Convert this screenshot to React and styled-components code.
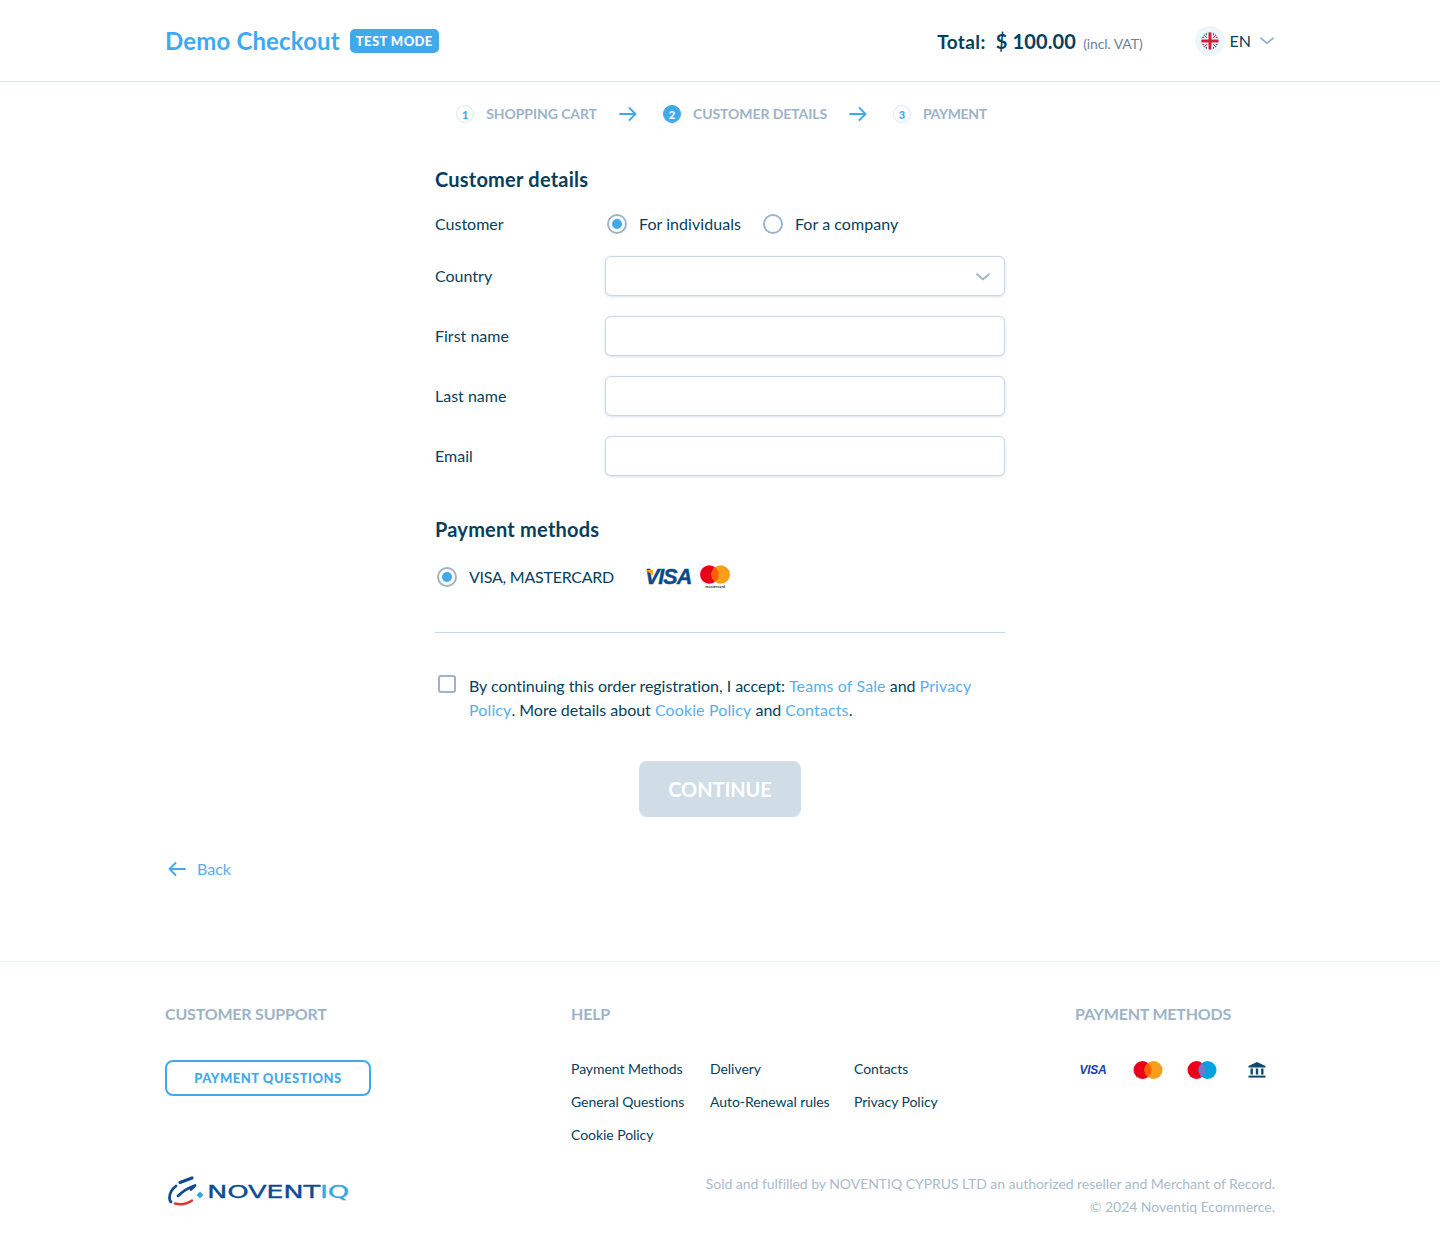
import React from "react";
import styled, { createGlobalStyle } from "styled-components";

const GlobalStyle = createGlobalStyle`
  html, body { margin: 0; padding: 0; background: #fff; }
  body { font-family: "Lato", "Liberation Sans", sans-serif; color: #063f5c; }
  * { box-sizing: border-box; }
`;

const Flag = () => (
  <svg width="18" height="18" viewBox="0 0 18 18">
    <defs>
      <clipPath id="flagClip">
        <circle cx="9" cy="9" r="8.5" />
      </clipPath>
    </defs>
    <g clipPath="url(#flagClip)">
      <rect width="18" height="18" fill="#2f4a8c" />
      <path d="M0 0l18 18M18 0L0 18" stroke="#f4f4f6" strokeWidth="3.4" />
      <path d="M0 0l18 18M18 0L0 18" stroke="#d3203a" strokeWidth="1" />
      <rect x="6" width="6" height="18" fill="#f4f4f6" />
      <rect y="6" width="18" height="6" fill="#f4f4f6" />
      <rect x="7.5" width="3" height="18" fill="#d3203a" />
      <rect y="7.5" width="18" height="3" fill="#d3203a" />
    </g>
  </svg>
);

const Chevron = ({ color = "#9db4c8", w = 14 }) => (
  <svg width={w} height="8" viewBox="0 0 14 8" fill="none">
    <path d="M1 1.2l6 5 6-5" stroke={color} strokeWidth="1.8" strokeLinecap="round" strokeLinejoin="round" />
  </svg>
);

const Arrow = ({ left }) => (
  <ArrowSvg $left={left} width="18" height="14" viewBox="0 0 18 14" fill="none">
    <path d="M1 7h15.5M10.5 1l6 6-6 6" stroke="#3fa9ec" strokeWidth="1.8" strokeLinecap="round" strokeLinejoin="round" />
  </ArrowSvg>
);

const Circles = ({ a, b, mid, w = 29, h = 18 }) => (
  <svg width={w} height={h} viewBox="0 0 29 18">
    <circle cx="9" cy="9" r="9" fill={a} />
    <circle cx="20" cy="9" r="9" fill={b} />
    <path d="M14.5 1.9a9 9 0 0 1 0 14.2a9 9 0 0 1 0-14.2z" fill={mid} />
  </svg>
);

const Bank = () => (
  <svg width="18" height="16" viewBox="0 0 18 16" fill="#0d4a6b">
    <path d="M9 0L17.5 4v1.6H.5V4z" />
    <rect x="2.5" y="6.5" width="2.4" height="6" />
    <rect x="7.8" y="6.5" width="2.4" height="6" />
    <rect x="13.1" y="6.5" width="2.4" height="6" />
    <rect x=".5" y="13.6" width="17" height="2" />
  </svg>
);

const LogoMark = () => (
  <svg width="40" height="32" viewBox="0 0 40 32" fill="none">
    <path d="M9 11C5 14 2.5 18 2.5 23c0 1.500.5 3 1.500 4" stroke="#0e4c92" strokeWidth="2.8" strokeLinecap="round" />
    <path d="M13 7.500L25 3" stroke="#0e4c92" strokeWidth="3.2" strokeLinecap="round" />
    <path d="M11 21c5-5 11-8.500 17-10.500l-4 4" stroke="#0e4c92" strokeWidth="2.8" strokeLinecap="round" strokeLinejoin="round" />
    <path d="M8 28.500c6 1.500 12 .5 17-3" stroke="#e3342f" strokeWidth="2.6" strokeLinecap="round" />
    <path d="M33 16.500l3.500 3.500-3.500 3.500-3.500-3.500z" fill="#35a8e0" />
  </svg>
);

const App = () => {
  return (
    <Page>
      <GlobalStyle />
      <Header>
        <Inner>
          <Brand>
            <BrandName>Demo Checkout</BrandName>
            <TestBadge>TEST MODE</TestBadge>
          </Brand>
          <HeaderRight>
            <Total>
              <TotalLabel>Total:</TotalLabel>
              <TotalPrice>$ 100.00</TotalPrice>
              <Vat>(incl. VAT)</Vat>
            </Total>
            <Lang>
              <FlagHold>
                <Flag />
              </FlagHold>
              <LangText>EN</LangText>
              <Chevron />
            </Lang>
          </HeaderRight>
        </Inner>
      </Header>

      <Steps>
        <Step>
          <StepNum>1</StepNum>
          <StepName>SHOPPING CART</StepName>
        </Step>
        <StepArrow>
          <Arrow />
        </StepArrow>
        <Step>
          <StepNum $active>2</StepNum>
          <StepName>CUSTOMER DETAILS</StepName>
        </Step>
        <StepArrow>
          <Arrow />
        </StepArrow>
        <Step>
          <StepNum>3</StepNum>
          <StepName $tight>PAYMENT</StepName>
        </Step>
      </Steps>

      <Form>
        <SectionTitle>Customer details</SectionTitle>
        <RadioRow>
          <Label>Customer</Label>
          <RadioOption>
            <Radio $on />
            <RadioText>For individuals</RadioText>
          </RadioOption>
          <RadioOption>
            <Radio />
            <RadioText>For a company</RadioText>
          </RadioOption>
        </RadioRow>
        <FieldRow>
          <Label>Country</Label>
          <Field>
            <Chevron />
          </Field>
        </FieldRow>
        <FieldRow>
          <Label>First name</Label>
          <Field />
        </FieldRow>
        <FieldRow>
          <Label>Last name</Label>
          <Field />
        </FieldRow>
        <FieldRow>
          <Label>Email</Label>
          <Field />
        </FieldRow>

        <PayTitle>Payment methods</PayTitle>
        <PayRow>
          <Radio $on />
          <PayName>VISA, MASTERCARD</PayName>
          <VisaText>VISA</VisaText>
          <McHold>
            <Circles a="#eb001b" b="#f79e1b" mid="#ff5f00" w={30} h={19} />
            <McText>mastercard</McText>
          </McHold>
        </PayRow>
        <Divider />
        <Terms>
          <CheckBox />
          <TermsText>
            By continuing this order registration, I accept: <A>Teams of Sale</A> and <A>Privacy Policy</A>. More details about{" "}
            <A>Cookie Policy</A> and <A>Contacts</A>.
          </TermsText>
        </Terms>
        <ContinueWrap>
          <Continue>CONTINUE</Continue>
        </ContinueWrap>
      </Form>

      <BackRow>
        <BackLink>
          <Arrow left />
          Back
        </BackLink>
      </BackRow>

      <Footer>
        <FooterInner>
          <FooterTop>
            <SupportCol>
              <FootTitle>CUSTOMER SUPPORT</FootTitle>
              <OutlineBtn>PAYMENT QUESTIONS</OutlineBtn>
            </SupportCol>
            <HelpCol>
              <FootTitle>HELP</FootTitle>
              <LinksGrid>
                <FootLink>Payment Methods</FootLink>
                <FootLink>Delivery</FootLink>
                <FootLink>Contacts</FootLink>
                <FootLink>General Questions</FootLink>
                <FootLink>Auto-Renewal rules</FootLink>
                <FootLink>Privacy Policy</FootLink>
                <FootLink>Cookie Policy</FootLink>
              </LinksGrid>
            </HelpCol>
            <MethodsCol>
              <FootTitle>PAYMENT METHODS</FootTitle>
              <MethodIcons>
                <MethodIcon>
                  <SmallVisa>VISA</SmallVisa>
                </MethodIcon>
                <MethodIcon>
                  <Circles a="#eb001b" b="#f79e1b" mid="#ff5f00" w={30} h={18} />
                </MethodIcon>
                <MethodIcon>
                  <Circles a="#eb001b" b="#00a1df" mid="#7375cf" w={30} h={18} />
                </MethodIcon>
                <MethodIcon>
                  <Bank />
                </MethodIcon>
              </MethodIcons>
            </MethodsCol>
          </FooterTop>
          <FooterBottom>
            <Logo>
              <LogoMark />
              <LogoWord>
                NOVENT<b>IQ</b>
              </LogoWord>
            </Logo>
            <Legal>
              Sold and fulfilled by NOVENTIQ CYPRUS LTD an authorized reseller and Merchant of Record.
              <br />© 2024 Noventiq Ecommerce.
            </Legal>
          </FooterBottom>
        </FooterInner>
      </Footer>
    </Page>
  );
};
export default App;

const ArrowSvg = styled.svg`
  display: block;
  transform: ${(p) => (p.$left ? "scaleX(-1)" : "none")};
`;
const Page = styled.div`
  width: 100%;
  min-height: 1244px;
  display: flex;
  flex-direction: column;
`;
const Header = styled.header`
  height: 82px;
  border-bottom: 1px solid #dde3e8;
  display: flex;
  justify-content: center;
`;
const Inner = styled.div`
  width: 1110px;
  display: flex;
  justify-content: space-between;
  align-items: center;
`;
const Brand = styled.div`
  display: flex;
  align-items: center;
  gap: 10px;
`;
const BrandName = styled.div`
  font-size: 24px;
  font-weight: 700;
  letter-spacing: 0.15px;
  color: #3fa9ec;
`;
const TestBadge = styled.div`
  height: 24px;
  padding: 0 6px;
  border-radius: 5px;
  background: #3fa9ec;
  color: #fff;
  font-size: 13px;
  font-weight: 900;
  letter-spacing: 0.4px;
  line-height: 24px;
`;
const HeaderRight = styled.div`
  display: flex;
  align-items: center;
`;
const Total = styled.div`
  display: flex;
  align-items: baseline;
  margin-right: 52px;
`;
const TotalLabel = styled.span`
  font-size: 19px;
  font-weight: 700;
  letter-spacing: 0.4px;
  margin-right: 10px;
`;
const TotalPrice = styled.span`
  font-size: 20px;
  font-weight: 700;
  letter-spacing: 0.15px;
  margin-right: 7px;
`;
const Vat = styled.span`
  font-size: 14px;
  letter-spacing: -0.1px;
  color: #6b8296;
`;
const Lang = styled.div`
  display: flex;
  align-items: center;
  padding-right: 1px;
`;
const FlagHold = styled.div`
  width: 30px;
  height: 30px;
  border-radius: 50%;
  background: #eff6fb;
  display: flex;
  align-items: center;
  justify-content: center;
  margin-right: 5px;
`;
const LangText = styled.span`
  font-size: 16px;
  margin-right: 9px;
`;
const Steps = styled.div`
  height: 64px;
  padding-left: 3px;
  display: flex;
  justify-content: center;
  align-items: center;
`;
const Step = styled.div`
  display: flex;
  align-items: center;
  gap: 12px;
`;
const StepArrow = styled.div`
  margin: 0 26px 0 22px;
`;
const StepNum = styled.div`
  width: 18px;
  height: 18px;
  border-radius: 50%;
  display: flex;
  align-items: center;
  justify-content: center;
  font-size: 11px;
  font-weight: 900;
  color: ${(p) => (p.$active ? "#fff" : "#3fa9ec")};
  background: ${(p) => (p.$active ? "#3fa9ec" : "#fff")};
  border: 1px solid ${(p) => (p.$active ? "#3fa9ec" : "#dbe9f4")};
`;
const StepName = styled.div`
  font-size: 14px;
  font-weight: 700;
  letter-spacing: ${(p) => (p.$tight ? "-0.35px" : "-0.08px")};
  padding-bottom: 2px;
  color: #9db4c8;
`;
const Form = styled.main`
  width: 570px;
  align-self: center;
  padding-top: 2px;
  display: flex;
  flex-direction: column;
`;
const SectionTitle = styled.h2`
  margin: 19px 0 0;
  font-size: 20px;
  line-height: 24px;
  font-weight: 700;
  letter-spacing: 0.22px;
  color: #063f5c;
`;
const Label = styled.div`
  width: 170px;
  flex-shrink: 0;
  font-size: 16px;
  padding-bottom: 2px;
`;
const RadioRow = styled.div`
  display: flex;
  align-items: center;
  height: 24px;
  margin-top: 21px;
`;
const RadioOption = styled.label`
  display: flex;
  align-items: center;
  gap: 12px;
  font-size: 16px;
  margin-left: 2px;
  margin-right: 20px;
`;
const RadioText = styled.span`
  padding-bottom: 2px;
  letter-spacing: 0.05px;
`;
const Radio = styled.span`
  width: 20px;
  height: 20px;
  border-radius: 50%;
  border: 2px solid #9db4c8;
  display: inline-flex;
  align-items: center;
  justify-content: center;
  flex-shrink: 0;
  &::after {
    content: "";
    width: 10px;
    height: 10px;
    border-radius: 50%;
    background: ${(p) => (p.$on ? "#3fa9ec" : "transparent")};
  }
`;
const FieldRow = styled.div`
  display: flex;
  align-items: center;
  height: 40px;
  margin-top: 20px;
`;
const Field = styled.div`
  width: 400px;
  height: 40px;
  border: 1px solid #c8d8e6;
  border-radius: 6px;
  background: #fff;
  box-shadow: 0 1px 3px rgba(100, 140, 170, 0.25);
  display: flex;
  align-items: center;
  justify-content: flex-end;
  padding: 1px 14px 0 0;
`;
const PayTitle = styled(SectionTitle)`
  margin-top: 41px;
`;
const PayRow = styled.div`
  display: flex;
  align-items: center;
  height: 30px;
  margin-top: 21px;
  padding-left: 2px;
`;
const PayName = styled.div`
  font-size: 16px;
  margin-left: 12px;
  width: 176px;
  letter-spacing: -0.25px;
  padding-bottom: 2px;
`;
const VisaText = styled.span`
  position: relative;
  font-family: "Liberation Sans", sans-serif;
  font-style: italic;
  font-weight: 700;
  color: #0b4a86;
  font-size: 21.500px;
  letter-spacing: -1px;
  -webkit-text-stroke: 0.4px #0b4a86;
  &::before {
    content: "";
    position: absolute;
    left: 0;
    top: 5px;
    width: 8px;
    height: 6px;
    background: #f4a51d;
    clip-path: polygon(0 0, 100% 0, 100% 100%);
  }
`;
const SmallVisa = styled.span`
  font-family: "Liberation Sans", sans-serif;
  font-style: italic;
  font-weight: 700;
  color: #1a3fa8;
  font-size: 12px;
  letter-spacing: -0.3px;
`;
const McHold = styled.div`
  display: flex;
  flex-direction: column;
  align-items: center;
  margin-left: 9px;
`;
const McText = styled.span`
  font-size: 4px;
  line-height: 5px;
  font-weight: 700;
  color: #333;
`;
const Divider = styled.div`
  height: 1px;
  background: #c8d8e6;
  margin-top: 40px;
`;
const Terms = styled.div`
  display: flex;
  margin-top: 41px;
  padding-left: 3px;
`;
const CheckBox = styled.span`
  width: 18px;
  height: 18px;
  border: 2px solid #9db4c8;
  border-radius: 3px;
  flex-shrink: 0;
  margin-top: 1px;
`;
const TermsText = styled.div`
  margin-left: 13px;
  font-size: 16px;
  line-height: 24px;
  letter-spacing: -0.03px;
`;
const A = styled.a`
  color: #5aaeea;
  letter-spacing: 0.12px;
`;
const ContinueWrap = styled.div`
  display: flex;
  justify-content: center;
  margin-top: 39px;
`;
const Continue = styled.div`
  width: 162px;
  height: 56px;
  border-radius: 8px;
  background: #d0dde6;
  color: #fff;
  font-size: 20px;
  font-weight: 700;
  letter-spacing: -0.1px;
  display: flex;
  align-items: center;
  justify-content: center;
`;
const BackRow = styled.div`
  width: 1110px;
  align-self: center;
  margin-top: 42px;
  height: 20px;
`;
const BackLink = styled.a`
  display: inline-flex;
  align-items: center;
  gap: 11px;
  font-size: 16px;
  color: #5aaeea;
  padding-left: 3px;
`;
const Footer = styled.footer`
  margin-top: 82px;
  border-top: 1px solid #e8edf1;
  display: flex;
  justify-content: center;
`;
const FooterInner = styled.div`
  width: 1110px;
  display: flex;
  flex-direction: column;
`;
const FooterTop = styled.div`
  display: flex;
  padding-top: 42px;
`;
const FootTitle = styled.div`
  font-size: 16px;
  line-height: 20px;
  font-weight: 700;
  letter-spacing: -0.2px;
  color: #9db4c8;
`;
const SupportCol = styled.div`
  width: 406px;
`;
const OutlineBtn = styled.div`
  width: 206px;
  height: 36px;
  margin-top: 36px;
  border: 2px solid #3fa9ec;
  border-radius: 8px;
  display: flex;
  align-items: center;
  justify-content: center;
  color: #3fa9ec;
  font-size: 13px;
  font-weight: 900;
  letter-spacing: 0.5px;
`;
const HelpCol = styled.div`
  width: 504px;
`;
const LinksGrid = styled.div`
  display: grid;
  grid-template-columns: 139px 144px 1fr;
  grid-auto-rows: 33px;
  margin-top: 36px;
`;
const FootLink = styled.a`
  font-size: 14px;
  line-height: 18px;
  letter-spacing: -0.05px;
  color: #063f5c;
`;
const MethodsCol = styled.div`
  flex: 1;
`;
const MethodIcons = styled.div`
  display: flex;
  justify-content: space-between;
  align-items: center;
  margin-top: 36px;
`;
const MethodIcon = styled.div`
  width: 36px;
  height: 20px;
  display: flex;
  align-items: center;
  justify-content: center;
`;
const FooterBottom = styled.div`
  display: flex;
  justify-content: space-between;
  align-items: center;
  margin-top: 13px;
`;
const Logo = styled.div`
  display: flex;
  align-items: center;
  margin: 0 0 8px 2px;
`;
const LogoWord = styled.div`
  width: 141px;
  font-family: "DejaVu Sans", sans-serif;
  font-size: 18px;
  letter-spacing: -0.2px;
  white-space: nowrap;
  color: #0e4c92;
  -webkit-text-stroke: 0.3px #0e4c92;
  transform: scaleX(1.52);
  transform-origin: left center;
  b {
    font-weight: 400;
    color: #35a8e0;
    -webkit-text-stroke: 0.3px #35a8e0;
  }
`;
const Legal = styled.div`
  text-align: right;
  font-size: 14px;
  line-height: 23px;
  letter-spacing: -0.04px;
  color: #a9bccb;
`;
